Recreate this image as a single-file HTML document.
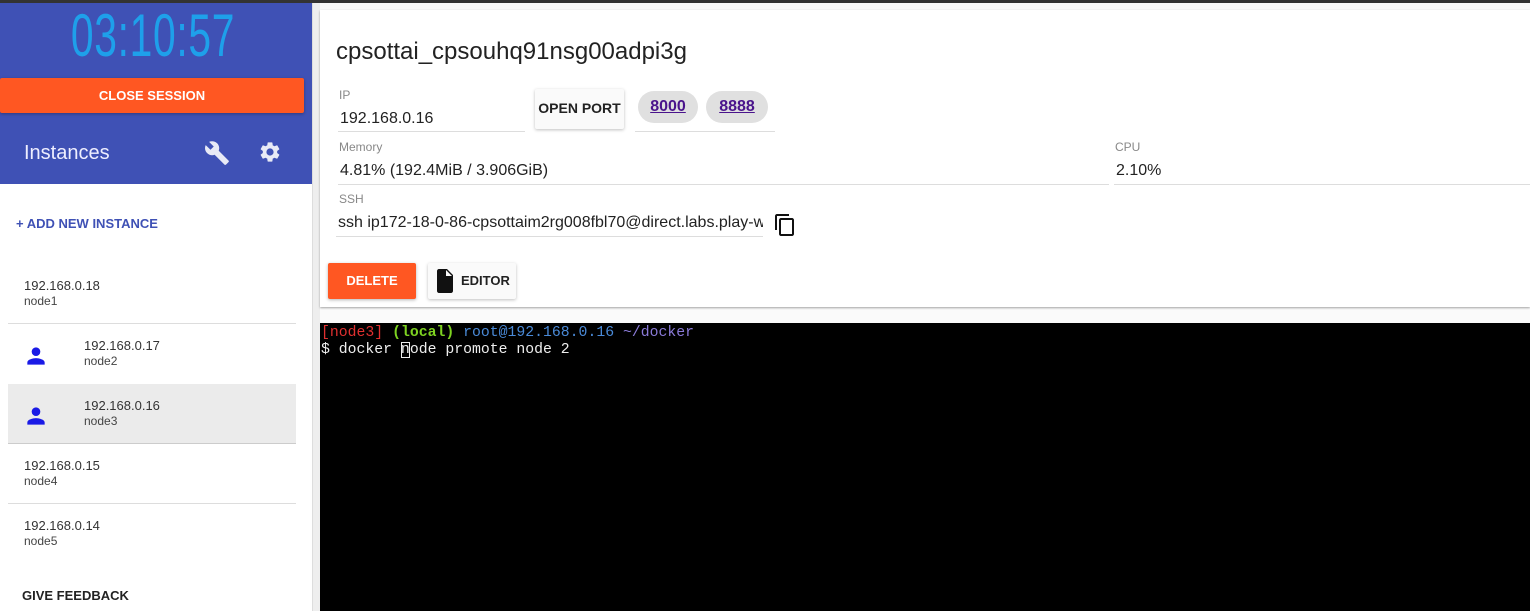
<!DOCTYPE html>
<html><head><meta charset="utf-8"><style>
*{margin:0;padding:0;box-sizing:border-box}
body{width:1530px;height:611px;overflow:hidden;background:#fafafa;font-family:"Liberation Sans",sans-serif;position:relative}
.a{position:absolute}
.lbl{font-size:12px;color:#888}
.val{font-size:16px;color:#222}
.line{border-bottom:1px solid #ddd}
.item .ip{font-size:13px;color:#333}
.item .nm{font-size:12px;color:#444}
.mono{font-family:"Liberation Mono",monospace;font-size:14.8px}
</style></head><body>
<div class="a" style="left:0;top:0;width:1530px;height:3px;background:#333"></div>
<div class="a" style="left:0;top:3px;width:312px;height:608px;background:#fff"></div>
<div class="a" style="left:312px;top:3px;width:8px;height:608px;background:#eee;border-left:1px solid #ddd"></div>
<div class="a" style="left:0;top:3px;width:312px;height:181px;background:#3f51b5"></div>
<div class="a" style="left:0;top:6px;width:306px;text-align:center;color:#1ea0ea;font-size:60px;line-height:60px;font-family:'Liberation Sans Narrow','Liberation Sans',sans-serif;letter-spacing:1px;transform:scaleX(0.68)">03:10:57</div>
<div class="a" style="left:0;top:78px;width:304px;height:35px;background:#ff5722;border-radius:2px;box-shadow:0 1px 3px rgba(0,0,0,.3);color:#fff;font-weight:bold;font-size:13px;text-align:center;line-height:35px">CLOSE SESSION</div>
<div class="a" style="left:24px;top:142px;color:#eef;font-size:20px">Instances</div>
<svg class="a" style="left:204px;top:140px" width="26" height="26" viewBox="0 0 24 24"><path fill="#e8eaf6" d="M22.7 19l-9.1-9.1c.9-2.3.4-5-1.5-6.9-2-2-5-2.4-7.4-1.3L9 6 6 9 1.6 4.7C.4 7.1.9 10.1 2.9 12.1c1.9 1.9 4.6 2.4 6.9 1.5l9.1 9.1c.4.4 1 .4 1.4 0l2.3-2.3c.5-.4.5-1.1.1-1.4z"/></svg>
<svg class="a" style="left:258px;top:140px" width="24" height="24" viewBox="0 0 24 24"><path fill="#e8eaf6" d="M19.14 12.94c.04-.3.06-.61.06-.94 0-.32-.02-.64-.07-.94l2.03-1.58a.49.49 0 0 0 .12-.61l-1.92-3.32a.49.49 0 0 0-.59-.22l-2.39.96c-.5-.38-1.03-.7-1.62-.94l-.36-2.54a.48.48 0 0 0-.48-.41h-3.84c-.24 0-.43.17-.47.41l-.36 2.54c-.59.24-1.13.57-1.62.94l-2.39-.96a.48.48 0 0 0-.59.22L2.74 8.87c-.12.21-.08.47.12.61l2.03 1.58c-.05.3-.09.63-.09.94s.02.64.07.94l-2.03 1.58a.49.49 0 0 0-.12.61l1.92 3.32c.12.22.37.29.59.22l2.39-.96c.5.38 1.03.7 1.62.94l.36 2.54c.05.24.24.41.48.41h3.84c.24 0 .44-.17.47-.41l.36-2.54c.59-.24 1.13-.56 1.62-.94l2.39.96c.22.08.47 0 .59-.22l1.92-3.32c.12-.22.07-.47-.12-.61l-2.01-1.58zM12 15.6A3.6 3.6 0 1 1 12 8.4a3.6 3.6 0 0 1 0 7.2z"/></svg>
<div class="a" style="left:16px;top:216px;color:#3f51b5;font-size:13px;font-weight:bold">+ ADD NEW INSTANCE</div>
<div class="a item" style="left:24px;top:278px"><div class="ip">192.168.0.18</div><div class="nm" style="margin-top:1px">node1</div></div>
<div class="a" style="left:8px;top:323px;width:288px;height:1px;background:#ddd"></div>
<div class="a" style="left:8px;top:384px;width:288px;height:60px;background:#ebebeb;border-bottom:1px solid #ccc"></div>
<svg class="a" style="left:23px;top:343px" width="26" height="26" viewBox="0 0 24 24"><path fill="#1a1ae6" d="M12 12a4 4 0 1 0 0-8 4 4 0 0 0 0 8zm0 2c-2.7 0-8 1.3-8 4v2h16v-2c0-2.7-5.3-4-8-4z"/></svg>
<div class="a item" style="left:84px;top:338px"><div class="ip">192.168.0.17</div><div class="nm" style="margin-top:1px">node2</div></div>
<svg class="a" style="left:23px;top:403px" width="26" height="26" viewBox="0 0 24 24"><path fill="#1a1ae6" d="M12 12a4 4 0 1 0 0-8 4 4 0 0 0 0 8zm0 2c-2.7 0-8 1.3-8 4v2h16v-2c0-2.7-5.3-4-8-4z"/></svg>
<div class="a item" style="left:84px;top:398px"><div class="ip">192.168.0.16</div><div class="nm" style="margin-top:1px">node3</div></div>
<div class="a item" style="left:24px;top:458px"><div class="ip">192.168.0.15</div><div class="nm" style="margin-top:1px">node4</div></div>
<div class="a" style="left:8px;top:503px;width:288px;height:1px;background:#ddd"></div>
<div class="a item" style="left:24px;top:518px"><div class="ip">192.168.0.14</div><div class="nm" style="margin-top:1px">node5</div></div>
<div class="a" style="left:22px;top:588px;font-size:13px;font-weight:bold;color:#222">GIVE FEEDBACK</div>
<div class="a" style="left:320px;top:10px;width:1210px;height:297px;background:#fff;box-shadow:0 1px 2px rgba(0,0,0,.35)"></div>
<div class="a" style="left:336px;top:38px;font-size:24px;color:#222">cpsottai_cpsouhq91nsg00adpi3g</div>
<div class="a lbl" style="left:339px;top:88px">IP</div>
<div class="a val" style="left:340px;top:110px">192.168.0.16</div>
<div class="a line" style="left:338px;top:131px;width:187px"></div>
<div class="a" style="left:535px;top:89px;width:89px;height:40px;background:#fafafa;box-shadow:0 1px 3px rgba(0,0,0,.25);border-radius:2px;font-size:14px;font-weight:bold;color:#222;text-align:center;line-height:38px">OPEN PORT</div>
<div class="a" style="left:638px;top:91px;width:60px;height:32px;background:#e0e0e0;border-radius:16px;text-align:center;line-height:32px;font-size:16px;font-weight:bold;color:#4a148c;text-decoration:underline">8000</div>
<div class="a" style="left:706px;top:91px;width:62px;height:32px;background:#e0e0e0;border-radius:16px;text-align:center;line-height:32px;font-size:16px;font-weight:bold;color:#4a148c;text-decoration:underline">8888</div>
<div class="a line" style="left:635px;top:131px;width:140px"></div>
<div class="a lbl" style="left:339px;top:140px">Memory</div>
<div class="a val" style="left:340px;top:162px">4.81% (192.4MiB / 3.906GiB)</div>
<div class="a line" style="left:338px;top:184px;width:771px"></div>
<div class="a lbl" style="left:1115px;top:140px">CPU</div>
<div class="a val" style="left:1116px;top:162px">2.10%</div>
<div class="a line" style="left:1114px;top:184px;width:416px"></div>
<div class="a lbl" style="left:339px;top:192px">SSH</div>
<div class="a val" style="left:338px;top:214px;width:425px;white-space:nowrap;overflow:hidden">ssh ip172-18-0-86-cpsottaim2rg008fbl70@direct.labs.play-with-docker.com</div>
<div class="a line" style="left:336px;top:236px;width:427px"></div>
<svg class="a" style="left:773px;top:213px" width="24" height="24" viewBox="0 0 24 24"><path fill="#111" d="M16 1H4c-1.1 0-2 .9-2 2v14h2V3h12V1zm3 4H8c-1.1 0-2 .9-2 2v14c0 1.1.9 2 2 2h11c1.1 0 2-.9 2-2V7c0-1.1-.9-2-2-2zm0 16H8V7h11v14z"/></svg>
<div class="a" style="left:328px;top:263px;width:88px;height:36px;background:#ff5722;border-radius:2px;box-shadow:0 1px 3px rgba(0,0,0,.3);color:#fff;font-weight:bold;font-size:13px;text-align:center;line-height:36px">DELETE</div>
<div class="a" style="left:428px;top:263px;width:88px;height:36px;background:#fafafa;border-radius:2px;box-shadow:0 1px 3px rgba(0,0,0,.25);color:#222;font-weight:bold;font-size:13px;line-height:36px;padding-left:33px">EDITOR</div>
<svg class="a" style="left:436px;top:269px" width="18" height="24" viewBox="0 0 18 24"><path fill="#111" d="M3 0h8l6 6v16c0 1.1-.9 2-2 2H3c-1.1 0-2-.9-2-2V2C1 .9 1.9 0 3 0zm7 1v6h6z"/></svg>
<div class="a" style="left:320px;top:323px;width:1210px;height:288px;background:#000"></div>
<div class="a mono" style="left:321px;top:325px;line-height:17px;white-space:pre"><span style="color:#e03030">[node3]</span> <span style="color:#7ed321;font-weight:bold">(local)</span> <span style="color:#4a8ad8">root@192.168.0.16</span> <span style="color:#8a7ad8">~/docker</span>
<span style="color:#eee">$ docker <span style="outline:1px solid #eee;outline-offset:-1px">n</span>ode promote node 2</span></div>
</body></html>
